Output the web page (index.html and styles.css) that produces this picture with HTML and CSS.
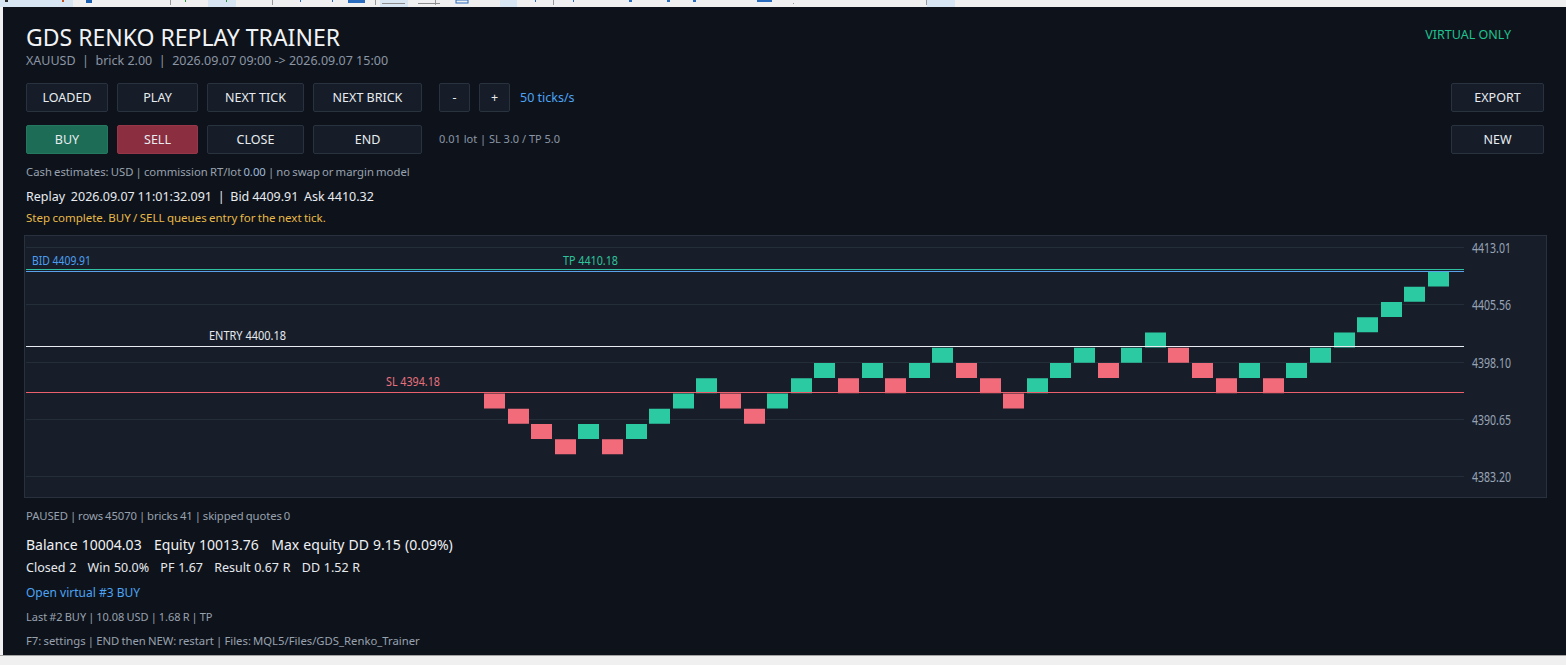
FILE: index.html
```html
<!doctype html>
<html>
<head>
<meta charset="utf-8">
<link rel="stylesheet" href="styles.css">
<title>GDS Renko Replay Trainer</title>
</head>
<body>

<svg class="toolbar" width="1566" height="7" viewBox="0 0 1566 7">
    <rect x="0" y="0" width="73" height="7" fill="#d8e5f3"/>
    <rect x="5" y="0" width="3" height="2" fill="#2b2b2b"/>
    <rect x="62" y="0" width="2" height="2" fill="#c8531c"/>
    <rect x="86" y="0" width="6" height="3" fill="#1c5fae"/>
    <rect x="208" y="0" width="28" height="7" fill="#d8e5f3"/>
    <rect x="380" y="0" width="28" height="7" fill="#d8e5f3"/>
    <rect x="500" y="0" width="17" height="7" fill="#d8e5f3"/>
    <rect x="927" y="0" width="28" height="7" fill="#d8e5f3"/>
    <g fill="#9a9a9a">
        <rect x="170" y="0" width="1" height="5"/>
        <rect x="272" y="0" width="1" height="5"/>
        <rect x="375" y="0" width="1" height="5"/>
        <rect x="435" y="0" width="1" height="5"/>
        <rect x="553" y="0" width="1" height="5"/>
        <rect x="926" y="0" width="1" height="5"/>
    </g>
    <rect x="185" y="0" width="1" height="2" fill="#2b9a3a"/>
    <rect x="226" y="0" width="1" height="2" fill="#2b9a3a"/>
    <g fill="#2a6cbd">
        <rect x="300" y="0" width="1" height="2"/>
        <rect x="332" y="0" width="1" height="2"/>
        <rect x="348" y="0" width="17" height="3"/>
        <rect x="535" y="0" width="1" height="2"/>
        <rect x="573" y="0" width="1" height="2"/>
        <rect x="629" y="0" width="3" height="2"/>
        <rect x="667" y="0" width="3" height="2"/>
        <rect x="693" y="0" width="3" height="2"/>
        <rect x="757" y="0" width="15" height="2"/>
    </g>
    <rect x="382" y="3" width="23" height="1" fill="#8c8c8c"/>
    <rect x="418" y="3" width="22" height="1" fill="#8c8c8c"/>
    <rect x="456" y="0" width="12" height="3" fill="none" stroke="#2a6cbd" stroke-width="1"/>
    <rect x="793" y="3" width="1" height="1" fill="#9a9a9a"/>
</svg>

<div class="app">

    <header class="top">
        <div>
            <h1>GDS RENKO REPLAY TRAINER</h1>
            <div class="meta">XAUUSD &nbsp;|&nbsp; brick 2.00 &nbsp;|&nbsp; 2026.09.07 09:00 -&gt; 2026.09.07 15:00</div>
        </div>
        <div class="virtual">VIRTUAL ONLY</div>
    </header>

    <div class="controls">
        <div class="rows">
            <div class="row">
                <button class="btn w82">LOADED</button>
                <button class="btn w81">PLAY</button>
                <button class="btn w97">NEXT TICK</button>
                <button class="btn w109">NEXT BRICK</button>
                <button class="btn small first">-</button>
                <button class="btn small">+</button>
                <span class="speed">50 ticks/s</span>
            </div>
            <div class="row">
                <button class="btn w82 buy">BUY</button>
                <button class="btn w81 sell">SELL</button>
                <button class="btn w97">CLOSE</button>
                <button class="btn w109">END</button>
                <span class="lot">0.01 lot | SL 3.0 / TP 5.0</span>
            </div>
        </div>
        <div class="side">
            <button class="btn w93">EXPORT</button>
            <button class="btn w93">NEW</button>
        </div>
    </div>

    <p class="note cash">Cash estimates: USD | commission RT/lot <span class="num">0.00</span> | no swap or margin model</p>
    <p class="replay">Replay &nbsp;2026.09.07 11:01:32.091 &nbsp;| &nbsp;Bid 4409.91 &nbsp;Ask 4410.32</p>
    <p class="step">Step complete. BUY / SELL queues entry for the next tick.</p>

    <div class="chart">
        <svg width="1521" height="261" viewBox="0 0 1521 261">
            <g class="grid">
                <line x1="1" y1="11.5" x2="1439" y2="11.5"/>
                <line x1="1" y1="68.5" x2="1439" y2="68.5"/>
                <line x1="1" y1="126.5" x2="1439" y2="126.5"/>
                <line x1="1" y1="183.5" x2="1439" y2="183.5"/>
                <line x1="1" y1="240.5" x2="1439" y2="240.5"/>
            </g>
            <g class="axis">
                <text x="1447" y="16.5" textLength="39" lengthAdjust="spacingAndGlyphs">4413.01</text>
                <text x="1447" y="73.5" textLength="39" lengthAdjust="spacingAndGlyphs">4405.56</text>
                <text x="1447" y="131.5" textLength="39" lengthAdjust="spacingAndGlyphs">4398.10</text>
                <text x="1447" y="188.5" textLength="39" lengthAdjust="spacingAndGlyphs">4390.65</text>
                <text x="1447" y="245.5" textLength="39" lengthAdjust="spacingAndGlyphs">4383.20</text>
            </g>

            <!-- bricks: x = 459 + i*23.6, y = 35.5 + level*15.25 -->
            <g class="down">
                <rect x="459" y="157.5" width="21" height="15"/>
                <rect x="483" y="172.75" width="21" height="15"/>
                <rect x="506" y="188" width="21" height="15"/>
                <rect x="530" y="203.25" width="21" height="15"/>
                <rect x="577" y="203.25" width="21" height="15"/>
                <rect x="695" y="157.5" width="21" height="15"/>
                <rect x="719" y="172.75" width="21" height="15"/>
                <rect x="813" y="142.25" width="21" height="15"/>
                <rect x="860" y="142.25" width="21" height="15"/>
                <rect x="931" y="127" width="21" height="15"/>
                <rect x="955" y="142.25" width="21" height="15"/>
                <rect x="978" y="157.5" width="21" height="15"/>
                <rect x="1073" y="127" width="21" height="15"/>
                <rect x="1143" y="111.75" width="21" height="15"/>
                <rect x="1167" y="127" width="21" height="15"/>
                <rect x="1191" y="142.25" width="21" height="15"/>
                <rect x="1238" y="142.25" width="21" height="15"/>
            </g>
            <g class="up">
                <rect x="553" y="188" width="21" height="15"/>
                <rect x="601" y="188" width="21" height="15"/>
                <rect x="624" y="172.75" width="21" height="15"/>
                <rect x="648" y="157.5" width="21" height="15"/>
                <rect x="671" y="142.25" width="21" height="15"/>
                <rect x="742" y="157.5" width="21" height="15"/>
                <rect x="766" y="142.25" width="21" height="15"/>
                <rect x="789" y="127" width="21" height="15"/>
                <rect x="837" y="127" width="21" height="15"/>
                <rect x="884" y="127" width="21" height="15"/>
                <rect x="907" y="111.75" width="21" height="15"/>
                <rect x="1002" y="142.25" width="21" height="15"/>
                <rect x="1025" y="127" width="21" height="15"/>
                <rect x="1049" y="111.75" width="21" height="15"/>
                <rect x="1096" y="111.75" width="21" height="15"/>
                <rect x="1120" y="96.5" width="21" height="15"/>
                <rect x="1214" y="127" width="21" height="15"/>
                <rect x="1261" y="127" width="21" height="15"/>
                <rect x="1285" y="111.75" width="21" height="15"/>
                <rect x="1309" y="96.5" width="21" height="15"/>
                <rect x="1332" y="81.25" width="21" height="15"/>
                <rect x="1356" y="66" width="21" height="15"/>
                <rect x="1379" y="50.75" width="21" height="15"/>
                <rect x="1403" y="35.5" width="21" height="15"/>
            </g>

            <line class="tp" x1="1" y1="33.5" x2="1439" y2="33.5"/>
            <line class="bid" x1="1" y1="35.5" x2="1439" y2="35.5"/>
            <line class="entry" x1="1" y1="110.5" x2="1439" y2="110.5"/>
            <line class="sl" x1="1" y1="156.5" x2="1439" y2="156.5"/>

            <text class="label bid-t" x="7" y="28.7" textLength="59" lengthAdjust="spacingAndGlyphs">BID 4409.91</text>
            <text class="label tp-t" x="538" y="28.7" textLength="55" lengthAdjust="spacingAndGlyphs">TP 4410.18</text>
            <text class="label entry-t" x="184" y="104" textLength="77" lengthAdjust="spacingAndGlyphs">ENTRY 4400.18</text>
            <text class="label sl-t" x="361" y="150" textLength="54" lengthAdjust="spacingAndGlyphs">SL 4394.18</text>
        </svg>
    </div>

    <p class="note paused">PAUSED | rows 45070 | bricks 41 | skipped quotes 0</p>
    <p class="balance">Balance 10004.03 &nbsp; Equity 10013.76 &nbsp; Max equity DD 9.15 (0.09%)</p>
    <p class="closed">Closed 2 &nbsp; Win 50.0% &nbsp; PF 1.67 &nbsp; Result 0.67 R &nbsp; DD 1.52 R</p>
    <p class="open">Open virtual #3 BUY</p>
    <p class="note last">Last #2 BUY | 10.08 USD | 1.68 R | TP</p>
    <p class="note help">F7: settings | END then NEW: restart | Files: MQL5/Files/GDS_Renko_Trainer</p>

</div>

<div class="bottom"></div>

</body>
</html>
```

FILE: styles.css
```css
html
{
    background:#f0f0f0;
}
body
{
    margin:0;
    font-family:"Noto Sans", "Open Sans", sans-serif;
    color:#e6e9ee;
}
p
{
    margin:0;
}
.toolbar
{
    display:block;
}
.app
{
    margin-left:3px;
    height:648px;
    box-sizing:border-box;
    padding:16px 21px 0 23px;
    background:#0e131b;
    overflow:hidden;
}
.bottom
{
    height:10px;
    border-top:1px solid #a3a3a3;
}

/* header */
.top
{
    display:flex;
    justify-content:space-between;
    align-items:flex-start;
}
h1
{
    margin:0;
    font-size:23px;
    line-height:28px;
    font-weight:normal;
    color:#f1f3f6;
}
.meta
{
    margin-top:2px;
    font-size:12.5px;
    line-height:16px;
    color:#8b95a4;
}
.virtual
{
    margin-top:4px;
    padding-right:34px;
    font-size:12.5px;
    line-height:16px;
    color:#1fc28f;
}

/* buttons */
.controls
{
    display:flex;
    justify-content:space-between;
    margin-top:14px;
}
.rows, .side
{
    display:flex;
    flex-direction:column;
    gap:13px;
}
.side
{
    margin-right:1px;
}
.row
{
    display:flex;
    align-items:center;
    gap:9px;
}
.btn
{
    height:29px;
    box-sizing:border-box;
    padding:0;
    border:1px solid #29323f;
    border-radius:2px;
    background:#161d28;
    color:#e8ecf1;
    font:inherit;
    font-size:12.5px;
}
.w82 { width:82px; }
.w81 { width:81px; }
.w97 { width:97px; }
.w109 { width:109px; }
.w93 { width:93px; }
.small { width:31px; }
.first { margin-left:8px; }
.buy
{
    background:#1c6c56;
    border-color:#23785f;
}
.sell
{
    background:#8a2e40;
    border-color:#963649;
}
.speed
{
    margin-left:1px;
    font-size:12.5px;
    color:#4da3f4;
}
.lot
{
    margin-left:8px;
    margin-top:-3px;
    font-size:11px;
    color:#8b96a6;
}

/* status lines */
.note
{
    font-size:11.3px;
    line-height:16px;
    word-spacing:-0.8px;
    color:#98a1ae;
}
.cash
{
    margin-top:10px;
}
.num
{
    color:#9fb8d6;
}
.replay
{
    margin-top:8px;
    font-size:12.5px;
    line-height:18px;
    word-spacing:-0.4px;
    color:#e8ebf0;
}
.step
{
    margin-top:4px;
    font-size:11.5px;
    line-height:16px;
    word-spacing:-0.6px;
    color:#e8b948;
}

/* chart */
.chart
{
    margin:9px -2px 0 -2px;
    border:1px solid #29313e;
    background:#171e2a;
}
.chart svg
{
    display:block;
}
.grid line
{
    stroke:#242d3a;
    stroke-width:1;
}
.axis text
{
    font-size:14px;
    fill:#97a3b5;
}
.up rect { fill:#2ccaa2; }
.down rect { fill:#f26b7b; }
.tp { stroke:#2fc0a2; stroke-width:1; }
.bid { stroke:#5aa2ea; stroke-width:1; }
.entry { stroke:#e8ecf2; stroke-width:1; }
.sl { stroke:#ec5f6c; stroke-width:1; }
.label
{
    font-size:12px;
}
.bid-t { fill:#4c9ff0; }
.tp-t { fill:#2fc49a; }
.entry-t { fill:#e6e9ee; }
.sl-t { fill:#e8707c; }

/* summary */
.paused
{
    margin-top:10px;
    letter-spacing:-0.1px;
}
.balance
{
    margin-top:12px;
    font-size:14px;
    line-height:18px;
    word-spacing:0.5px;
    color:#eef0f3;
}
.closed
{
    margin-top:6px;
    font-size:12.5px;
    line-height:16px;
    word-spacing:0.5px;
}
.open
{
    margin-top:9px;
    font-size:12px;
    line-height:16px;
    color:#4da3f4;
}
.last
{
    margin-top:8px;
    font-size:11px;
}
.help
{
    margin-top:8px;
}
```
